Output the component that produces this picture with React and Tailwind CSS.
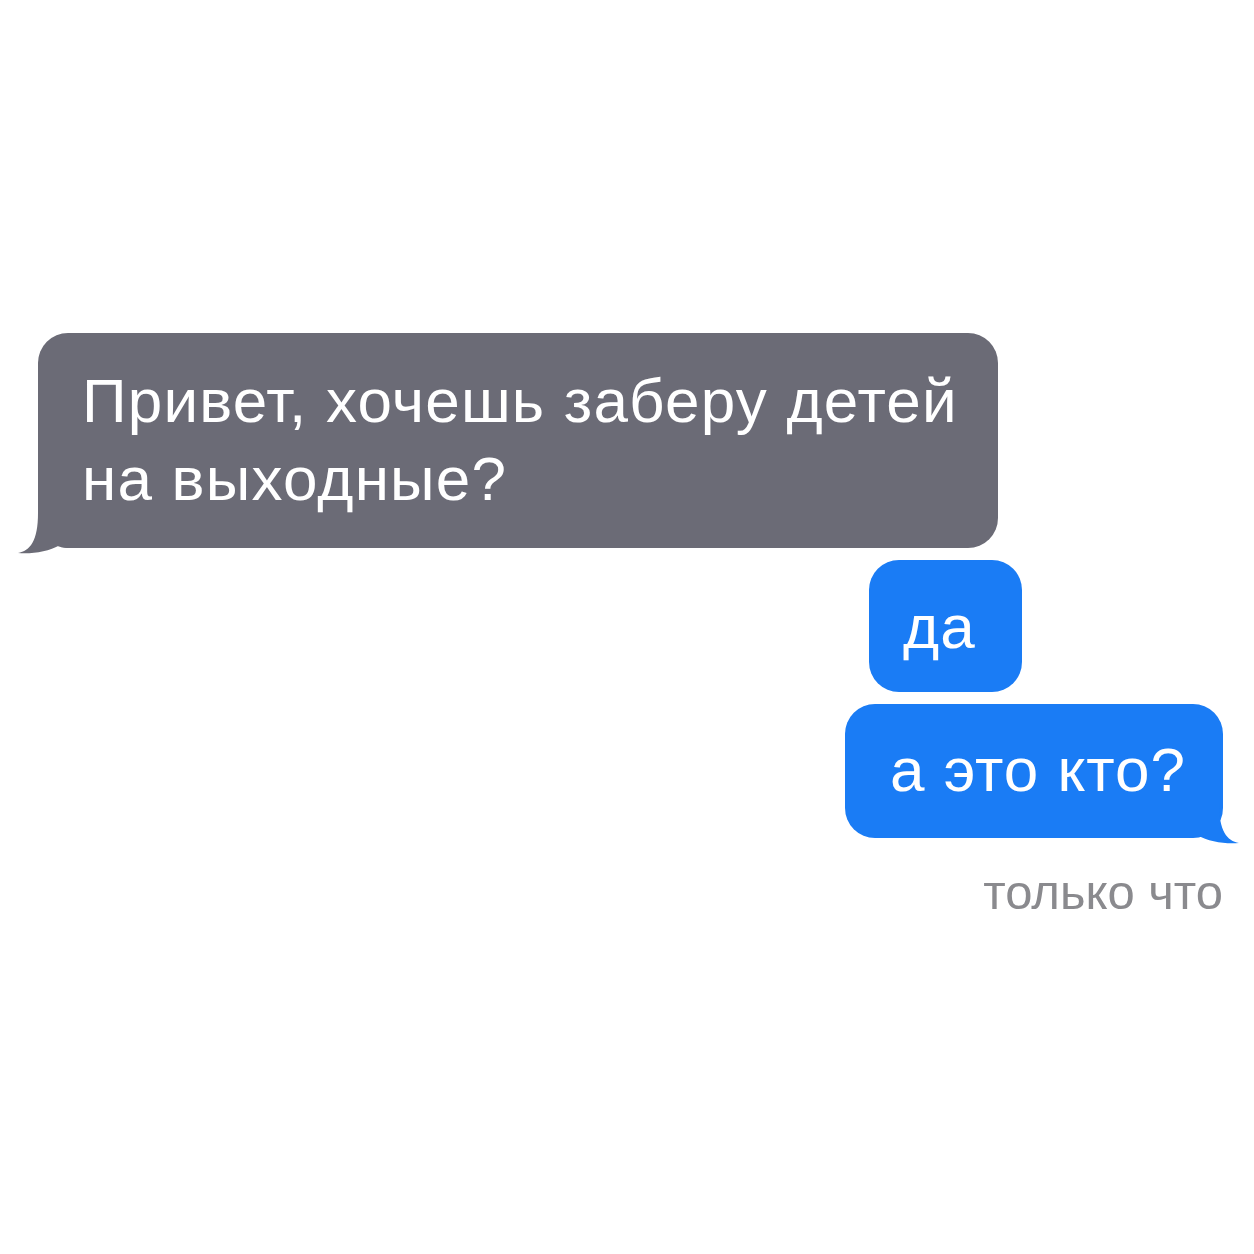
const font = { fontFamily: '"Liberation Sans", Arial, sans-serif' };

// iOS-style bubble tail, drawn for the bottom-left corner; mirrored for outgoing messages
function Tail({ color, className }) {
  return (
    <svg
      width="62"
      height="54"
      viewBox="0 0 62 54"
      className={className}
    >
      <path
        d="M0 52 C12 50 20 40 20 12 L20 0 L62 0 L62 47 L50 47 C46 47 44 46 42 44 C30 51 14 53 0 52 Z"
        fill={color}
      />
    </svg>
  );
}

export default function App() {
  return (
    <div className="w-full h-[1254px] bg-white flex flex-col pt-[333px]" style={font}>
      {/* incoming */}
      <div className="relative ml-[38px] w-[960px] h-[215px] rounded-[30px] bg-[#6b6b76] pl-[44px] pt-[29px]">
        <Tail color="#6b6b76" className="absolute left-[-20px] bottom-[-7px]" />
        <p className="relative text-white text-[62px] leading-[78px] tracking-[1.2px]">
          Привет, хочешь заберу детей
          <br />
          на выходные?
        </p>
      </div>

      {/* outgoing */}
      <div className="mt-[12px] ml-[869px] w-[153px] h-[132px] rounded-[30px] bg-[#1a7cf5] pl-[34px] pt-[28px]">
        <p className="text-white text-[62px] leading-[78px] tracking-[1px]">да</p>
      </div>

      <div className="relative mt-[12px] ml-[845px] w-[378px] h-[134px] rounded-[30px] bg-[#1a7cf5] pl-[45px] pt-[27px]">
        <Tail color="#1a7cf5" className="absolute right-[-16px] bottom-[-7px] -scale-x-100" />
        <p className="relative text-white text-[62px] leading-[78px] tracking-[1px]">а это кто?</p>
      </div>

      <div className="flex justify-end pr-[31px] mt-[26px]">
        <span className="text-[#8a8a8e] text-[49px] leading-[56px]">только что</span>
      </div>
    </div>
  );
}
